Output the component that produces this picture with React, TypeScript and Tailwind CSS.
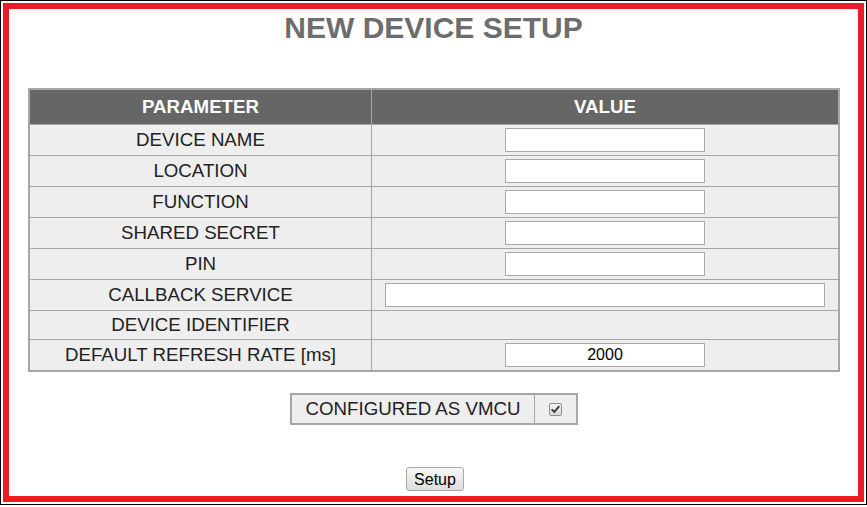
import React from 'react'

const rows: { label: string; input?: 'short' | 'long'; value?: string; h: string }[] = [
  { label: 'DEVICE NAME', input: 'short', h: 'h-[30px]' },
  { label: 'LOCATION', input: 'short', h: 'h-[30px]' },
  { label: 'FUNCTION', input: 'short', h: 'h-[30px]' },
  { label: 'SHARED SECRET', input: 'short', h: 'h-[30px]' },
  { label: 'PIN', input: 'short', h: 'h-[30px]' },
  { label: 'CALLBACK SERVICE', input: 'long', h: 'h-[30px]' },
  { label: 'DEVICE IDENTIFIER', h: 'h-[28px]' },
  { label: 'DEFAULT REFRESH RATE [ms]', input: 'short', value: '2000', h: 'h-[30px]' },
]

function CheckedBox() {
  return (
    <span className="flex h-[13px] w-[13px] items-center justify-center rounded-[2px] border border-[#8e8e8e] bg-gradient-to-b from-[#f4f4f4] to-[#d8d8d8]">
      <svg width="9" height="9" viewBox="0 0 9 9">
        <path d="M1.2 4.8 L3.4 7 L7.8 1.6" fill="none" stroke="#333" strokeWidth="1.8" strokeLinecap="round" strokeLinejoin="round" />
      </svg>
    </span>
  )
}

export default function App() {
  return (
    <div className="h-[505px] w-[867px] border border-black bg-white p-[2px] font-['Liberation_Sans',Arial,sans-serif]">
      <div className="flex h-full flex-col items-center border-[6px] border-[#ed1c24] bg-white">
        <h1 className="mt-[2px] h-[34px] text-[30px] font-bold leading-[34px] text-[#6d6d6d]">NEW DEVICE SETUP</h1>

        {/* parameter table */}
        <div className="ml-[1px] mt-[43px] w-[812px] border-2 border-[#a6a6a6] bg-[#eeeeee] text-[18.7px] text-[#222]">
          <div className="flex h-[34px] bg-[#666666] font-bold text-white">
            <div className="flex w-[342px] items-center justify-center border-r border-[#a6a6a6]">PARAMETER</div>
            <div className="flex flex-1 items-center justify-center">VALUE</div>
          </div>
          {rows.map((r) => (
            <div key={r.label} className="flex border-t border-[#a6a6a6]">
              <div className={`flex w-[342px] items-center justify-center border-r border-[#a6a6a6] ${r.h}`}>{r.label}</div>
              <div className={`flex flex-1 items-center justify-center ${r.h}`}>
                {r.input && (
                  <input
                    type="text"
                    defaultValue={r.value}
                    className={`h-[24px] border border-[#a9a9a9] bg-white text-center text-[16px] text-black outline-none ${
                      r.input === 'long' ? 'w-[440px]' : 'w-[200px]'
                    }`}
                  />
                )}
              </div>
            </div>
          ))}
        </div>

        {/* vmcu flag */}
        <div className="ml-[1px] mt-[21px] flex h-[32px] w-[288px] border-2 border-[#a6a6a6] bg-[#eeeeee] text-[18.7px] text-[#222]">
          <div className="flex w-[243px] items-center justify-center border-r border-[#a6a6a6]">CONFIGURED AS VMCU</div>
          <div className="flex flex-1 items-center justify-center">
            <CheckedBox />
          </div>
        </div>

        <button
          type="button"
          className="ml-[3px] mt-[42px] h-[24px] w-[58px] rounded-[3px] border border-[#a9a9a9] bg-gradient-to-b from-[#f7f7f7] to-[#dcdcdc] text-[16px] text-black"
        >
          Setup
        </button>
      </div>
    </div>
  )
}
